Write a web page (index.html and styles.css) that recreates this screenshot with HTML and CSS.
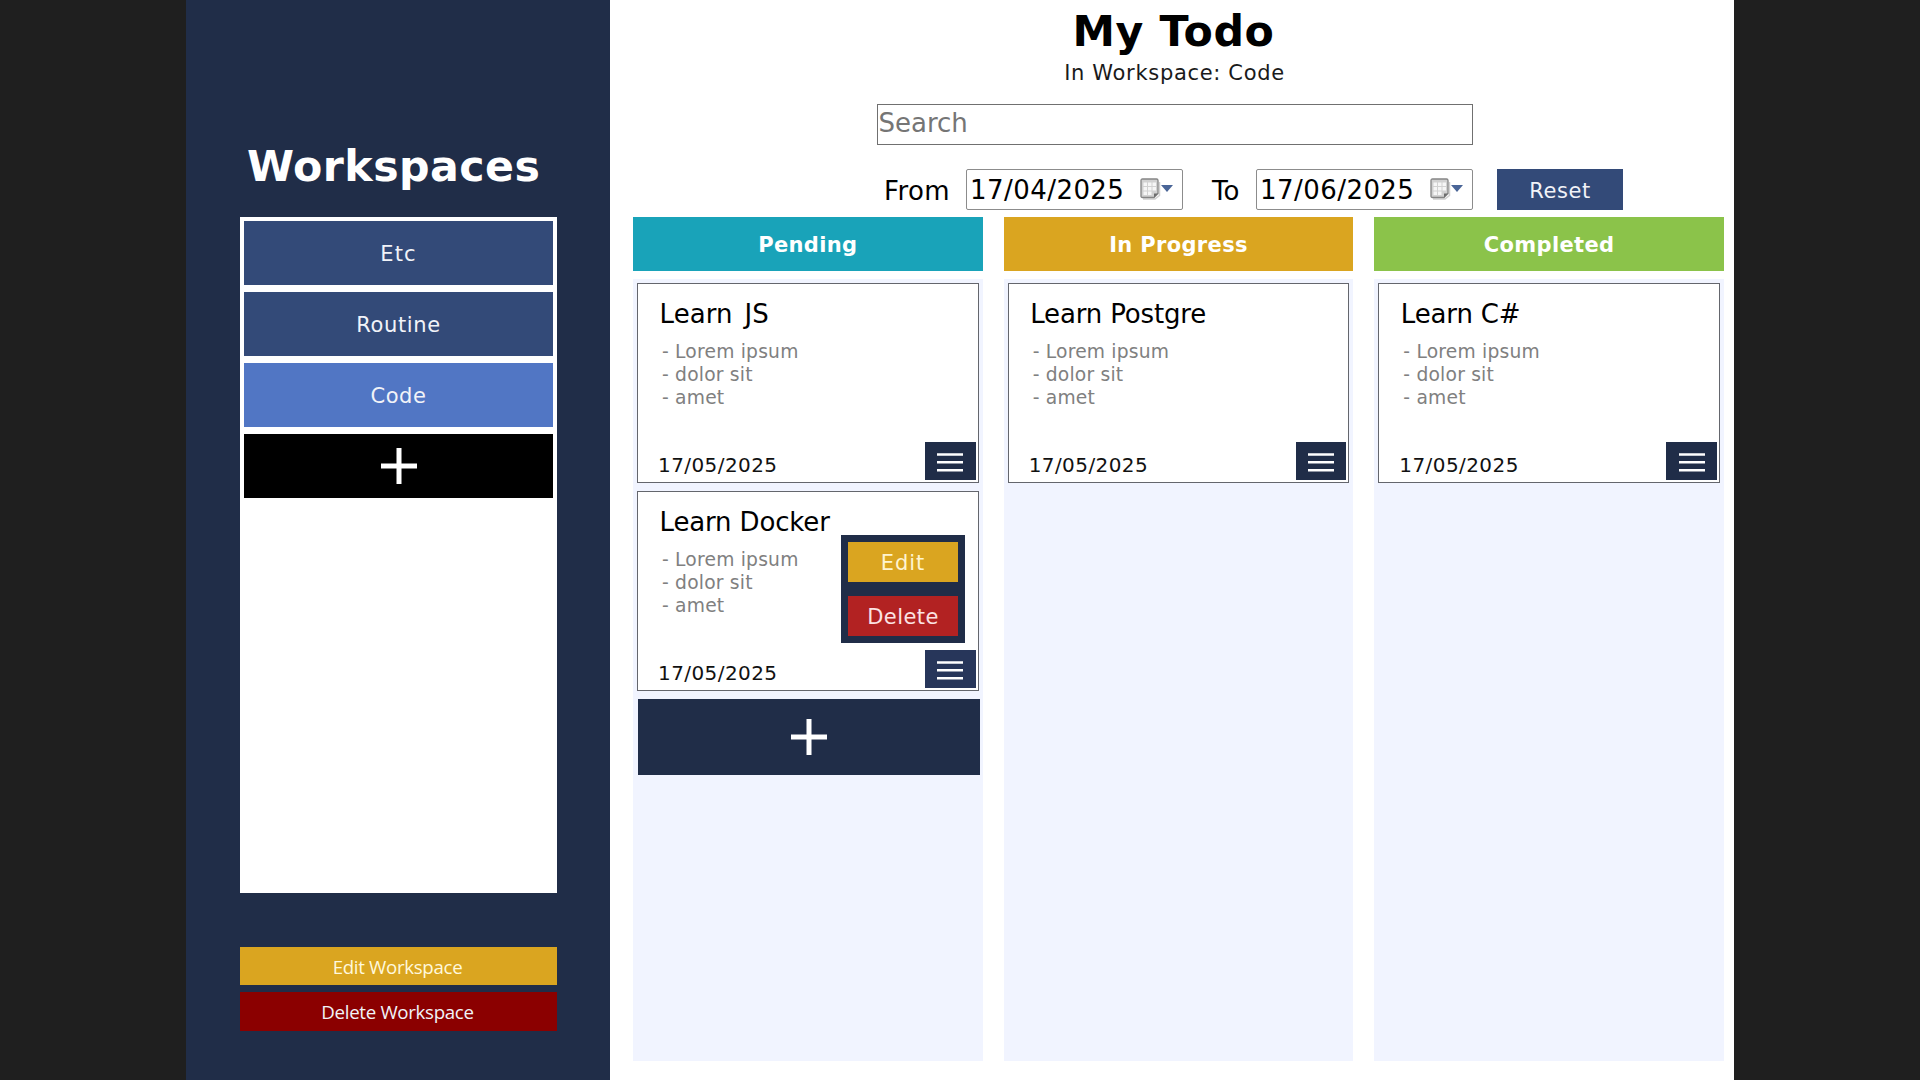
FILE: index.html
```
<!DOCTYPE html>
<html lang="en">
<head>
<meta charset="utf-8">
<title>My Todo</title>
<link rel="stylesheet" href="styles.css">
</head>
<body>
<svg class="defs" width="0" height="0" aria-hidden="true">
  <symbol id="plus" viewBox="0 0 36 36"><path d="M18 0V36M0 18H36" fill="none" stroke="#fff" stroke-width="5"/></symbol>
  <symbol id="bars" viewBox="0 0 26 19"><path d="M0 1.5H26M0 9.3H26M0 17.2H26" fill="none" stroke="#fff" stroke-width="2.6"/></symbol>
  <symbol id="calendar" viewBox="0 0 34 22">
    <path d="M3 21H15L19.500 17.500V4" fill="none" stroke="#d0d0d0" stroke-width="1.500"/>
    <path d="M2.500 1H16.500Q18 1 18 2.500V15.500L14 19.500H2.500Q1 19.500 1 18V2.500Q1 1 2.500 1Z" fill="#d2d2d2" stroke="#858585" stroke-width="1.300"/>
    <path d="M3.500 4.500H7V8H3.500ZM8 4.500H11.500V8H8ZM12.500 4.500H16V8H12.500ZM3.500 9H7V12.500H3.500ZM8 9H11.500V12.500H8ZM12.500 9H16V12.500H12.500ZM3.500 13.500H7V17H3.500ZM8 13.500H11.500V17H8Z" fill="#f6f6f6"/>
    <path d="M14 19.500V15.500H18Z" fill="#6d6d6d"/>
    <path d="M21 7H33L27 14Z" fill="#4a6597"/>
  </symbol>
</svg>
<div class="app">
  <aside class="sidebar">
    <h1 class="sidebar-title">Workspaces</h1>
    <nav class="workspaces">
      <button class="workspace short">Etc</button>
      <button class="workspace">Routine</button>
      <button class="workspace active">Code</button>
      <button class="workspace new"><svg class="plus"><use href="#plus"/></svg></button>
    </nav>
    <div class="workspace-actions">
      <button class="action edit">Edit Workspace</button>
      <button class="action remove">Delete Workspace</button>
    </div>
  </aside>
  <main class="main">
    <header class="header">
      <h1 class="title">My Todo</h1>
      <p class="subtitle">In Workspace: Code</p>
      <input class="search" type="text" placeholder="Search">
    </header>
    <div class="filters">
      <span class="label from">From</span>
      <div class="date"><span>17/04/2025</span><svg class="calendar"><use href="#calendar"/></svg></div>
      <span class="label to">To</span>
      <div class="date"><span>17/06/2025</span><svg class="calendar"><use href="#calendar"/></svg></div>
      <button class="reset">Reset</button>
    </div>
    <div class="board">
      <section class="column">
        <h2 class="column-title pending">Pending</h2>
        <div class="cards">
          <article class="card">
            <h3 class="card-title wide">Learn JS</h3>
            <p class="card-text">- Lorem ipsum<br>- dolor sit<br>- amet</p>
            <div class="card-foot"><time class="due">17/05/2025</time><button class="burger"><svg class="bars"><use href="#bars"/></svg></button></div>
          </article>
          <article class="card">
            <h3 class="card-title">Learn Docker</h3>
            <p class="card-text">- Lorem ipsum<br>- dolor sit<br>- amet</p>
            <div class="card-foot"><time class="due">17/05/2025</time><button class="burger open"><svg class="bars"><use href="#bars"/></svg></button></div>
            <div class="menu">
              <button class="menu-item menu-edit">Edit</button>
              <button class="menu-item menu-delete">Delete</button>
            </div>
          </article>
          <button class="add-card"><svg class="plus"><use href="#plus"/></svg></button>
        </div>
      </section>
      <section class="column">
        <h2 class="column-title progress">In Progress</h2>
        <div class="cards">
          <article class="card">
            <h3 class="card-title">Learn Postgre</h3>
            <p class="card-text">- Lorem ipsum<br>- dolor sit<br>- amet</p>
            <div class="card-foot"><time class="due">17/05/2025</time><button class="burger"><svg class="bars"><use href="#bars"/></svg></button></div>
          </article>
        </div>
      </section>
      <section class="column">
        <h2 class="column-title completed">Completed</h2>
        <div class="cards">
          <article class="card">
            <h3 class="card-title">Learn C#</h3>
            <p class="card-text">- Lorem ipsum<br>- dolor sit<br>- amet</p>
            <div class="card-foot"><time class="due">17/05/2025</time><button class="burger"><svg class="bars"><use href="#bars"/></svg></button></div>
          </article>
        </div>
      </section>
    </div>
  </main>
</div>
</body>
</html>
```
FILE: styles.css
```
* { box-sizing: border-box; margin: 0; padding: 0; }

body {
  height: 1080px;
  overflow: hidden;
  background: #1f1f1f;
  font-family: Verdana, "DejaVu Sans", sans-serif;
  color: #000;
}

button {
  display: flex;
  align-items: center;
  justify-content: center;
  border: 0;
  font: inherit;
  font-size: 21px;
  letter-spacing: .6px;
  color: #f1f3f8;
}

.defs { display: block; height: 0; }

.app {
  display: flex;
  width: 1547.5px;
  height: 1080px;
  margin-left: 186px;
}

/* Sidebar */
.sidebar {
  display: flex;
  flex-direction: column;
  width: 424px;
  padding: 136px 53px 0 54px;
  background: #202d48;
}

.sidebar-title {
  margin-bottom: 20.5px;
  padding-left: 7px;
  font-size: 42.7px;
  line-height: 60px;
  letter-spacing: .46px;
  white-space: nowrap;
  color: #fff;
}

.workspaces {
  display: flex;
  flex-direction: column;
  gap: 7px;
  height: 676px;
  padding: 4px;
  background: #fff;
}

.workspace { height: 64px; padding-top: 3px; background: #334a78; }
.workspace.short { letter-spacing: 1.2px; }
.workspace.active { background: #5176c4; }
.workspace.new { padding-top: 0; background: #000; }

.plus { width: 36px; height: 36px; }

.workspace-actions {
  display: flex;
  flex-direction: column;
  gap: 7px;
  margin-top: 54.5px;
}

.action {
  height: 38px;
  padding: 0 2px 0 0;
  font-family: "Segoe UI", "Open Sans", sans-serif;
  font-size: 18.7px;
  letter-spacing: -.32px;
}

.edit { background: #daa520; color: #fff8dc; }
.remove { height: 39px; background: #8b0000; }

/* Main area */
.main {
  display: flex;
  flex-direction: column;
  flex: 1;
  padding: 6px 9.5px 19.5px 23px;
  background: #fff;
}

.header {
  display: flex;
  flex-direction: column;
  align-items: center;
  padding-right: 8px;
}

.title { padding-right: 2px; font-size: 42.7px; line-height: 50px; letter-spacing: .6px; }
.subtitle { margin-top: 5px; font-size: 21px; line-height: 24px; letter-spacing: .68px; color: #1a1a1a; }

.search {
  width: 596px;
  height: 41px;
  margin: 19px 0 24px;
  padding: 0 1px 3px;
  border: 1px solid #707070;
  background: #fff;
  font: 26px Verdana, "DejaVu Sans", sans-serif;
}
.search::placeholder { color: #757575; }

.filters {
  display: flex;
  height: 40px;
  padding-left: 251px;
}

.label { padding-top: 2px; font-size: 26px; line-height: 40px; }
.from { width: 82px; letter-spacing: .4px; }
.to { width: 73px; padding-left: 29px; }

.date {
  display: flex;
  align-items: center;
  justify-content: space-between;
  width: 217px;
  height: 41px;
  padding: 0 8px 0 3px;
  border: 1px solid #8c8c8c;
  border-radius: 2px;
  font-size: 26px;
  line-height: 36px;
  letter-spacing: .45px;
}

.calendar { width: 34px; height: 22px; margin-bottom: 1px; }

.reset {
  width: 126px;
  height: 41px;
  margin-left: 24px;
  padding-top: 2px;
  background: #334a78;
}

/* Board */
.board {
  display: grid;
  grid-template-columns: repeat(3, minmax(0, 1fr));
  gap: 21px;
  flex: 1;
  margin-top: 8px;
}

.column { display: flex; flex-direction: column; gap: 8px; }

.column-title {
  height: 54px;
  padding-top: 1px;
  font-size: 21px;
  line-height: 54px;
  letter-spacing: .35px;
  text-align: center;
  color: #fff;
}

.pending { background: #19a3b9; }
.progress { background: #daa520; }
.completed { background: #8bc34a; }

.cards {
  display: flex;
  flex-direction: column;
  gap: 8px;
  flex: 1;
  padding: 4px;
  background: #f1f4ff;
}

.card {
  display: flex;
  flex-direction: column;
  position: relative;
  height: 200px;
  padding: 15px 2px 2px 20px;
  border: 1px solid #64666d;
  background: #fff;
}

.card-title {
  margin-left: 1.5px;
  font-size: 26px;
  font-weight: 400;
  line-height: 31px;
  letter-spacing: -.15px;
}
.card-title.wide { letter-spacing: .1px; word-spacing: 3.500px; }

.card-text {
  margin: 11px 0 0 4px;
  font-size: 18.7px;
  line-height: 22.9px;
  letter-spacing: .2px;
  color: #808080;
}

.card-foot {
  display: flex;
  justify-content: space-between;
  align-items: flex-end;
  margin-top: auto;
}

.due { font-size: 20px; line-height: 30px; letter-spacing: .42px; color: #111; }

.burger { width: 50.5px; height: 38px; padding-top: 2px; background: #202d48; }
.burger.open { background: #27365a; }
.bars { width: 26px; height: 19px; }

.add-card {
  width: 342px;
  height: 76px;
  margin-left: 1px;
  background: #202d48;
}

/* Popup over the card it belongs to */
.menu {
  display: grid;
  gap: 14px;
  position: absolute;
  top: 43px;
  left: 203px;
  width: 124px;
  height: 108px;
  padding: 7px;
  background: #202d48;
}

.menu-item { padding-top: 2px; }
.menu-edit { background: #daa520; color: #fff4cf; letter-spacing: 1px; }
.menu-delete { background: #b22222; color: #fbe3e3; letter-spacing: .45px; }
```
